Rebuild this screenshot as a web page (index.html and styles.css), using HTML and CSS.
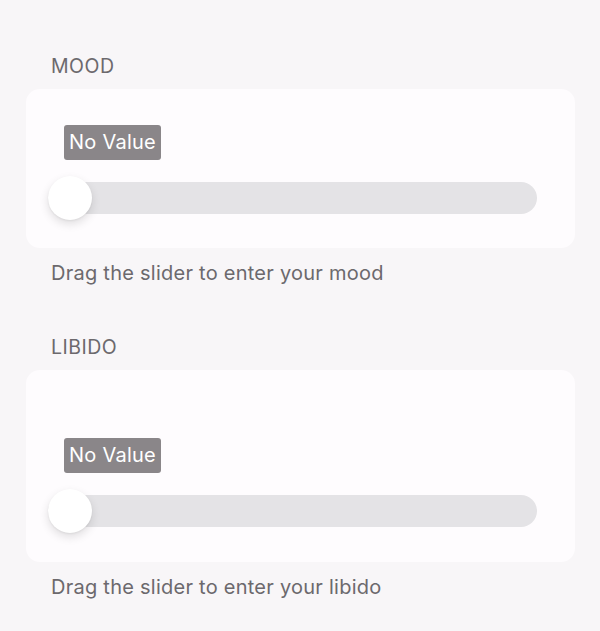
FILE: index.html
```html
<!DOCTYPE html>
<html lang="en">
<head>
<meta charset="utf-8">
<link rel="stylesheet" href="styles.css">
</head>
<body>
<main class="page">
  <section class="group">
    <div class="group-label">MOOD</div>
    <div class="card">
      <div class="slider">
        <span class="badge">No Value</span>
        <div class="track"><span class="thumb"></span></div>
      </div>
    </div>
    <div class="helper">Drag the slider to enter your mood</div>
  </section>
  <section class="group">
    <div class="group-label">LIBIDO</div>
    <div class="card card-tall">
      <div class="slider">
        <span class="badge">No Value</span>
        <div class="track"><span class="thumb"></span></div>
      </div>
    </div>
    <div class="helper">Drag the slider to enter your libido</div>
  </section>
</main>
</body>
</html>
```
FILE: styles.css
```css
html, body {
  margin: 0;
  padding: 0;
  background: #f8f6f8;
}
body {
  font-family: Inter, "Noto Sans", "Liberation Sans", sans-serif;
  color: #6c696d;
  width: 600px;
  height: 631px;
  overflow: hidden;
}
.page {
  display: flex;
  flex-direction: column;
  padding: 54px 25px 0 26px;
  gap: 50px;
}
.group {
  display: flex;
  flex-direction: column;
}
.group-label {
  font-size: 19.5px;
  line-height: 24px;
  padding-left: 25px;
  letter-spacing: 0.5px;
  margin-bottom: 11px;
}
.card {
  background: #fefcfe;
  border-radius: 14px;
  padding: 36px 38px 34px 22px;
}
.card-tall {
  padding-top: 68px;
  padding-bottom: 35px;
}
.slider {
  display: flex;
  flex-direction: column;
  align-items: flex-start;
}
.badge {
  background: #8a8689;
  color: #ffffff;
  font-size: 20px;
  line-height: 35px;
  letter-spacing: 0.25px;
  padding: 0 5px;
  border-radius: 3px;
  margin-left: 16px;
  margin-bottom: 22px;
}
.track {
  position: relative;
  align-self: stretch;
  height: 32px;
  border-radius: 16px;
  background: #e4e3e6;
}
.thumb {
  position: absolute;
  left: 0;
  top: -6px;
  width: 44px;
  height: 44px;
  border-radius: 50%;
  background: #ffffff;
  box-shadow: 0 4px 10px rgba(0, 0, 0, 0.12), 0 1px 2px rgba(0, 0, 0, 0.06);
}
.helper {
  font-size: 20px;
  line-height: 24px;
  letter-spacing: 0.25px;
  padding-left: 25px;
  margin-top: 13px;
}
```
